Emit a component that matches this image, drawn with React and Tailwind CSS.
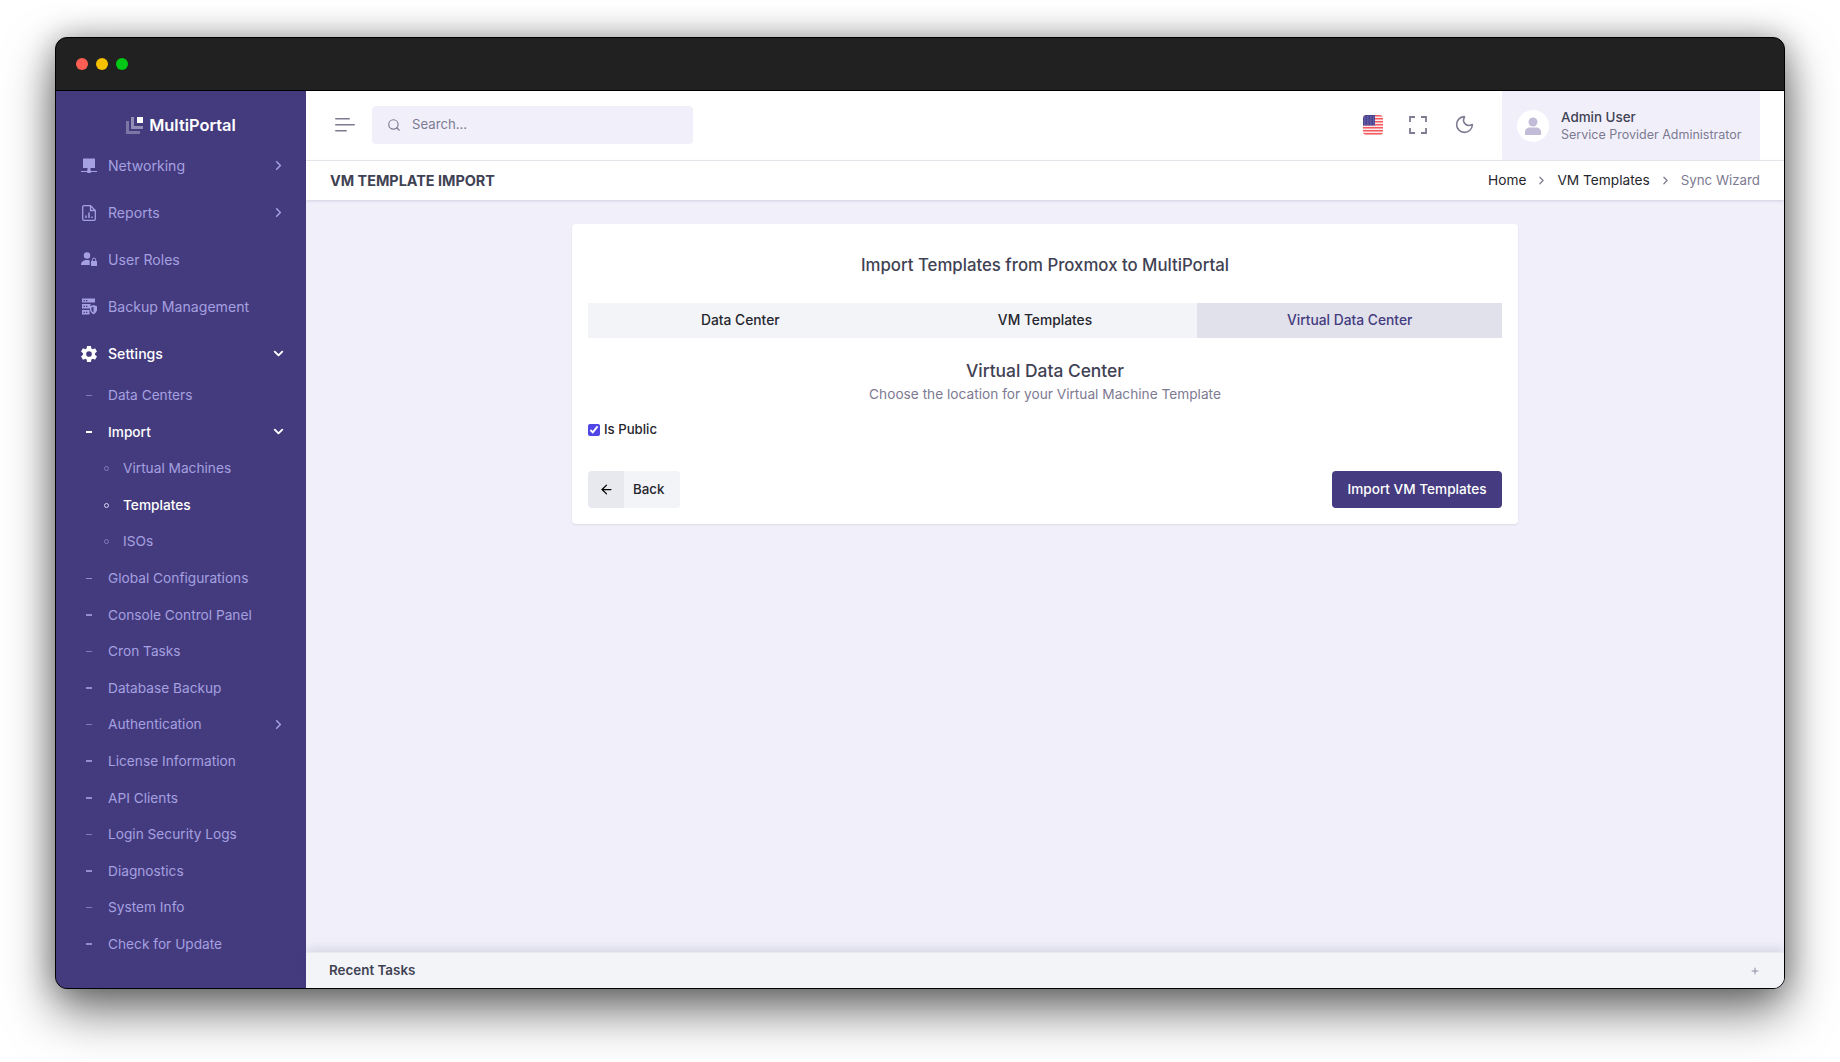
import { ChevronRight, ChevronDown, ArrowLeft, Search, Plus, Moon } from "lucide-react";
import { IoSettingsSharp } from "react-icons/io5";

const font = "font-['Inter','Liberation_Sans',sans-serif]";

function NetworkIcon() {
  return (
    <svg viewBox="0 0 16 16" className="w-4 h-4" fill="currentColor">
      <rect x="2" y="0.500" width="12" height="9.500" rx="0.500" />
      <rect x="6.500" y="10" width="3" height="2.500" />
      <rect x="0" y="13" width="16" height="1" />
      <rect x="6" y="12" width="4" height="3" rx="1" />
    </svg>
  );
}

function ReportIcon() {
  return (
    <svg viewBox="0 0 14 16" className="w-[14px] h-4" fill="none" stroke="currentColor" strokeWidth="1.300">
      <path d="M2 .7h6.500l4.800 4.800V14a1.300 1.300 0 0 1-1.300 1.300H2A1.300 1.300 0 0 1 .7 14V2A1.300 1.300 0 0 1 2 .7z" />
      <path d="M8.500 .7v4.800h4.800" />
      <path d="M4 13v-2.500M7 13V7.500M10 13v-1.500" strokeWidth="1.500" />
    </svg>
  );
}

function RolesIcon() {
  return (
    <svg viewBox="0 0 16 15" className="w-4 h-[15px]" fill="currentColor">
      <circle cx="6" cy="3.500" r="3.200" />
      <path d="M0 13c0-3.200 2.600-5 6-5 1 0 1.900.1 2.700.4V13z" />
      <rect x="10" y="9" width="6" height="5" rx="0.600" />
      <path d="M11.300 9V7.800a1.700 1.700 0 0 1 3.400 0V9" fill="none" stroke="currentColor" strokeWidth="1" />
    </svg>
  );
}

function BackupIcon() {
  return (
    <svg viewBox="0 0 16 17" className="w-4 h-[17px]" fill="currentColor">
      <path d="M1 .5h13v4H1z" />
      <path d="M1 6h8.500v4.500H1z" />
      <path d="M1 12h7.500v4.500H1z" />
      <path d="M12.500 7l3.500 1.300v3.200c0 2.200-1.600 3.800-3.500 4.700-1.900-.9-3.500-2.500-3.500-4.700V8.300z" />
      <path d="M12.500 8.700v5.800c-1.100-.6-2.100-1.600-2.100-3V9.500z" fill="#443b7e" />
      <rect x="2.500" y="2" width="1.300" height="1.300" fill="#443b7e" />
      <rect x="5" y="2" width="1.300" height="1.300" fill="#443b7e" />
      <rect x="2.500" y="7.700" width="1.300" height="1.300" fill="#443b7e" />
      <rect x="5" y="7.700" width="1.300" height="1.300" fill="#443b7e" />
      <rect x="2.500" y="13.700" width="1.300" height="1.300" fill="#443b7e" />
      <rect x="5" y="13.700" width="1.300" height="1.300" fill="#443b7e" />
    </svg>
  );
}

function Logo() {
  return (
    <svg viewBox="0 0 17 17" className="w-[17px] h-[17px] mr-[6px]">
      <path d="M0 4h3v10h11v3H0z" fill="#fff" fillOpacity="0.3" />
      <path d="M5 0h3v9h9v3H5z" fill="#fff" fillOpacity="0.42" />
      <rect x="11" y="0" width="6" height="6" fill="#fff" />
    </svg>
  );
}

function Flag() {
  return (
    <svg viewBox="0 0 20 20" className="w-5 h-5 mb-[2px]">
      <defs>
        <clipPath id="flagclip">
          <rect width="20" height="20" rx="3.500" />
        </clipPath>
      </defs>
      <g clipPath="url(#flagclip)">
        <rect width="20" height="20" fill="#fbeaea" />
        {[0, 3, 6, 9, 12, 15, 18].map((y) => (
          <rect key={y} y={y} width="20" height="1.500" fill="#f4595f" />
        ))}
        <rect width="12" height="10.500" fill="#4a4390" />
        {[1.500, 3.500, 5.500, 7.500, 9.500].map((y) =>
          [1.500, 4.500, 7.500, 10.500].map((x) => (
            <rect key={x + "-" + y} x={x} y={y} width="0.800" height="0.800" fill="#b9b5e6" />
          ))
        )}
      </g>
    </svg>
  );
}

function Fullscreen() {
  return (
    <svg viewBox="0 0 18 18" className="w-[18px] h-[18px]" fill="none" stroke="currentColor" strokeWidth="1.800">
      <path d="M1 6V1h5M12 1h5v5M17 12v5h-5M6 17H1v-5" />
    </svg>
  );
}

function MenuLines() {
  return (
    <svg viewBox="0 0 20 14" className="w-5 h-[14px] mb-[2px]" fill="#7d7a92">
      <rect x="0" y="0" width="15" height="1.600" rx="0.800" />
      <rect x="0" y="6" width="20" height="1.600" rx="0.800" />
      <rect x="0" y="12" width="12" height="1.600" rx="0.800" />
    </svg>
  );
}

function MainItem({ icon, label, arrow, active }) {
  return (
    <div className={`flex items-center h-[47px] pl-6 pr-5 text-[14.100px] ${active ? "text-white font-medium" : "text-[#a5a0e0]"}`}>
      <span className="w-[18px] flex justify-center">{icon}</span>
      <span className="ml-[10px] flex-1">{label}</span>
      {arrow === "right" && <ChevronRight size={15} strokeWidth={2.500} />}
      {arrow === "down" && <ChevronDown size={15} strokeWidth={3} className="text-white" />}
    </div>
  );
}

function SubItem({ label, arrow, active, faint }) {
  return (
    <div className={`flex items-center h-[36.600px] pl-[30px] pr-5 text-[13.700px] ${active ? "text-white font-medium" : "text-[#a5a0e0]"}`}>
      <span className={`w-[6px] h-[1.500px] ${active ? "bg-white" : faint ? "bg-[#7f79bd]" : "bg-[#938ed2]"}`} />
      <span className="ml-4 flex-1">{label}</span>
      {arrow === "right" && <ChevronRight size={15} strokeWidth={2.500} />}
      {arrow === "down" && <ChevronDown size={15} strokeWidth={3} className="text-white" />}
    </div>
  );
}

function SubSubItem({ label, active }) {
  return (
    <div className={`flex items-center h-[36.600px] pl-[48px] text-[13.700px] ${active ? "text-white font-medium" : "text-[#a5a0e0]"}`}>
      <span className={`w-[5px] h-[5px] rounded-full border ${active ? "border-[#d8d6f2]" : "border-[#7f79bd]"}`} />
      <span className="ml-[14px]">{label}</span>
    </div>
  );
}

function Sidebar() {
  return (
    <aside className="w-[250px] bg-[#443b7e] flex flex-col shrink-0 overflow-hidden">
      <div className="h-[51px] flex items-end justify-center pb-[8px]">
        <Logo />
        <span className="text-white text-[16.400px] font-semibold leading-[17px]">MultiPortal</span>
      </div>
      <MainItem icon={<NetworkIcon />} label="Networking" arrow="right" />
      <MainItem icon={<ReportIcon />} label="Reports" arrow="right" />
      <MainItem icon={<RolesIcon />} label="User Roles" />
      <MainItem icon={<BackupIcon />} label="Backup Management" />
      <MainItem icon={<IoSettingsSharp size={18} />} label="Settings" arrow="down" active />
      <SubItem label="Data Centers" faint />
      <SubItem label="Import" arrow="down" active />
      <SubSubItem label="Virtual Machines" />
      <SubSubItem label="Templates" active />
      <SubSubItem label="ISOs" />
      <SubItem label="Global Configurations" />
      <SubItem label="Console Control Panel" />
      <SubItem label="Cron Tasks" faint />
      <SubItem label="Database Backup" />
      <SubItem label="Authentication" arrow="right" faint />
      <SubItem label="License Information" />
      <SubItem label="API Clients" />
      <SubItem label="Login Security Logs" faint />
      <SubItem label="Diagnostics" />
      <SubItem label="System Info" faint />
      <SubItem label="Check for Update" />
    </aside>
  );
}

function Header() {
  return (
    <header className="h-[70px] shrink-0 bg-white border-b border-[#e9e9ee] flex items-center pl-[29px] pr-[24px]">
      <MenuLines />
      <div className="ml-[17px] mb-[2px] w-[321px] h-[38px] rounded bg-[#f1f0fa] flex items-center pl-[15px] text-[#7d7a92]">
        <Search size={14} strokeWidth={2} />
        <span className="ml-[11px] text-[13.200px]">Search...</span>
      </div>
      <div className="flex-1" />
      <Flag />
      <span className="ml-[26px] mb-[2px] text-[#7d7a92]"><Fullscreen /></span>
      <span className="ml-[27px] mb-[2px] text-[#7d7a92]"><Moon size={21} strokeWidth={1.800} /></span>
      <div className="ml-[27px] w-[258px] self-stretch bg-[#f1f0fa] flex items-center pl-[15px]">
        <div className="w-8 h-8 rounded-full bg-white flex items-center justify-center">
          <svg viewBox="0 0 16 18" className="w-4 h-[18px]" fill="#c3bcd8">
            <circle cx="8" cy="5" r="4.500" />
            <path d="M0 18v-3c0-3 2.500-4.500 4.500-4.500h7c2 0 4.500 1.500 4.500 4.500v3z" />
          </svg>
        </div>
        <div className="ml-3">
          <div className="text-[13.400px] leading-[18px] font-medium text-[#3f4254]">Admin User</div>
          <div className="text-[12.500px] leading-[18px] text-[#7d7a92]">Service Provider Administrator</div>
        </div>
      </div>
    </header>
  );
}

function Breadcrumb() {
  return (
    <div className="relative z-10 h-[39px] shrink-0 bg-white shadow-[0_1px_3px_rgba(60,55,110,0.18)] flex items-center pl-[24px] pr-[24px]">
      <h1 className="mt-[1px] text-[14.400px] font-bold text-[#3f4254] flex-1">VM TEMPLATE IMPORT</h1>
      <span className="text-[13.700px] text-[#26262e]">Home</span>
      <ChevronRight size={13} strokeWidth={2.200} className="mx-[9px] text-[#7d7a92]" />
      <span className="text-[13.700px] text-[#26262e]">VM Templates</span>
      <ChevronRight size={13} strokeWidth={2.200} className="mx-[9px] text-[#7d7a92]" />
      <span className="text-[13.300px] text-[#7d7a92]">Sync Wizard</span>
    </div>
  );
}

function Card() {
  return (
    <div className="w-[946px] h-[300px] mx-auto bg-white rounded shadow-[0_1px_2px_rgba(60,55,110,0.12)] px-4">
      <div className="h-[79px] flex items-center justify-center pt-[5px] text-[16.800px] font-medium text-[#3f4254]">
        Import Templates from Proxmox to MultiPortal
      </div>
      <div className="grid grid-cols-3 h-[35px] bg-[#f3f4f8] text-[13.800px] font-medium text-[#26262e]">
        <div className="flex items-center justify-center">Data Center</div>
        <div className="flex items-center justify-center">VM Templates</div>
        <div className="flex items-center justify-center bg-[#e1e1ec] text-[#443b7e]">Virtual Data Center</div>
      </div>
      <div className="mt-[21px] text-center text-[17.400px] leading-[24px] font-medium text-[#3f4254]">Virtual Data Center</div>
      <div className="text-center text-[13.700px] leading-[22px] text-[#7d7a92]">Choose the location for your Virtual Machine Template</div>
      <label className="mt-[16px] flex items-center h-[18px] text-[13.200px] font-medium text-[#26262e]">
        <input type="checkbox" defaultChecked className="w-3 h-3 m-0 accent-[#4f46e5]" />
        <span className="ml-1">Is Public</span>
      </label>
      <div className="mt-[32px] flex justify-between">
        <button type="button" className="flex items-center w-[92px] h-[37px] rounded bg-[#f3f4f8] text-[13.300px] font-medium text-[#26262e] overflow-hidden">
          <span className="w-9 h-full bg-[#e8e9ee] flex items-center justify-center"><ArrowLeft size={15} strokeWidth={2} className="text-black" /></span>
          <span className="ml-[9px]">Back</span>
        </button>
        <button type="button" className="w-[170px] h-[37px] rounded bg-[#453b80] text-white text-[13.600px] font-medium">Import VM Templates</button>
      </div>
    </div>
  );
}

export default function App() {
  return (
    <div className={`${font} w-full h-[1062px] bg-white overflow-hidden px-[55px] pt-[37px]`}>
      <div className="h-[952px] rounded-[12px] border border-black bg-[#212121] overflow-hidden flex flex-col shadow-[0_22px_50px_rgba(0,0,0,0.55),0_0_30px_rgba(0,0,0,0.3)]">
        <div className="h-[53px] shrink-0 flex items-center pl-[20px] gap-2 border-b border-black">
          <span className="w-3 h-3 rounded-full bg-[#ff5f52]" />
          <span className="w-3 h-3 rounded-full bg-[#f5c000]" />
          <span className="w-3 h-3 rounded-full bg-[#00c814]" />
        </div>
        <div className="flex-1 flex min-h-0">
          <Sidebar />
          <main className="flex-1 flex flex-col min-w-0 bg-[#f1f0fa]">
            <Header />
            <Breadcrumb />
            <div className="flex-1 pt-6">
              <Card />
            </div>
            <div className="relative h-[36px] shrink-0 bg-[#f3f4f8] border-t border-[#e9e9ee] shadow-[0_-4px_10px_rgba(60,55,110,0.14)] flex items-center justify-between pl-[23px] pr-[24px]">
              <span className="text-[13.400px] font-semibold text-[#3f4254]">Recent Tasks</span>
              <Plus size={10} strokeWidth={2} className="text-[#7d7a92]" />
            </div>
          </main>
        </div>
      </div>
    </div>
  );
}
